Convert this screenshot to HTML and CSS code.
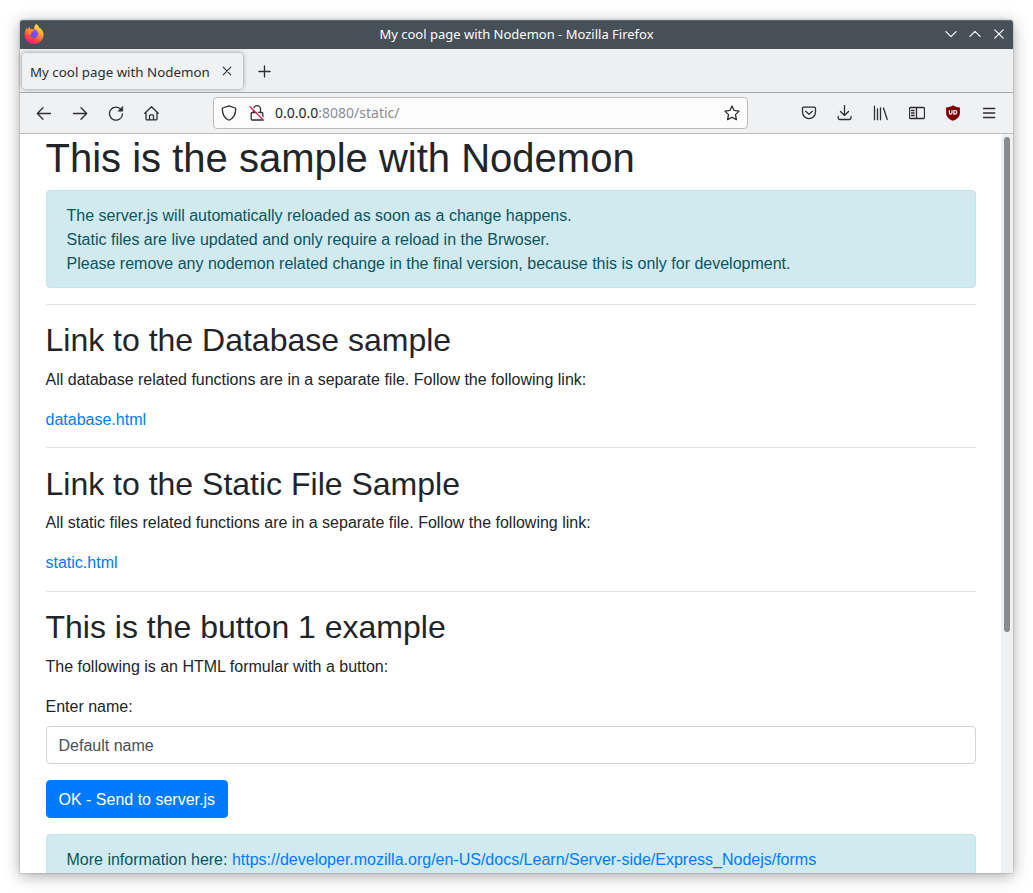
FILE: index.html
```html
<!DOCTYPE html>
<html lang="en">
<head>
<meta charset="utf-8">
<title>My cool page with Nodemon</title>
<link rel="stylesheet" href="styles.css">
</head>
<body>
<div class="window">
  <header class="titlebar">
    <svg class="firefox" viewBox="0 0 20 20">
      <defs>
        <linearGradient id="flame" x1=".8" y1="0" x2=".3" y2="1">
          <stop offset="0" stop-color="#fff44f"/><stop offset=".4" stop-color="#ffa22b"/><stop offset=".7" stop-color="#ff4b3c"/><stop offset="1" stop-color="#e9168a"/>
        </linearGradient>
        <linearGradient id="globe" x1=".7" y1="0" x2=".3" y2="1">
          <stop offset="0" stop-color="#a64cf0"/><stop offset="1" stop-color="#5b4be0"/>
        </linearGradient>
      </defs>
      <path fill="url(#flame)" d="M12.4 0c1.500 1.200 2.400 2.500 2.800 3.800 2.400 1.100 4.400 3.800 4.400 7a9.500 9.200 0 0 1-19 .2c0-3 .8-5.300 2-7.300.2.900.5 1.400.8 1.700C4 4.300 4.800 3.400 5.600 3c0 .9.400 1.500.9 2 1.300-.2 2.500.1 3.600.8C9.700 3.700 10.600 1.600 12.400 0z"/>
      <circle cx="10" cy="9.800" r="4.200" fill="url(#globe)"/>
      <path fill="#ff8a22" d="M3.500 5.500C5.500 4.600 8 5 10 6.600c0 1-2.300 1.100-2.700 2 .2.900-.8 1.600-1.100 2.600C4.500 10 3.300 8 3.500 5.500z"/>
    </svg>
    <span class="window-title">My cool page with Nodemon - Mozilla Firefox</span>
    <div class="window-buttons">
      <svg viewBox="0 0 12 12"><path d="M.9 3.600 6 8.700l5.100-5.100"/></svg>
      <svg viewBox="0 0 12 12"><path d="M.9 8.400 6 3.300l5.100 5.100"/></svg>
      <svg viewBox="0 0 12 12"><path d="m1.800 1.800 8.400 8.400m0-8.400-8.400 8.400"/></svg>
    </div>
  </header>
  <div class="tabs">
    <div class="tab">
      <span>My cool page with Nodemon</span>
      <svg class="tab-close" viewBox="0 0 10 10"><path d="m1.200 1.200 7.600 7.600m0-7.600-7.600 7.600"/></svg>
    </div>
    <svg class="new-tab" viewBox="0 0 13 13"><path d="M6.500.9v11.200M.9 6.500h11.200"/></svg>
  </div>
  <nav class="toolbar">
    <div class="nav-buttons">
      <svg viewBox="0 0 16 16"><path d="M14.500 8.500h-13M7 2.800 1.300 8.500 7 14.200"/></svg>
      <svg viewBox="0 0 16 16"><path d="M1.500 8.500h13M9 2.800l5.700 5.700L9 14.200"/></svg>
      <svg viewBox="0 0 16 16"><path d="M13 4.500A6.500 6.500 0 1 0 14.500 9"/><path class="solid" d="M14.800 1.500v4.700h-4.700z"/></svg>
      <svg viewBox="0 0 16 16"><path d="M.8 8.300 7.500 1.700l6.700 6.600M2 7.300v6.400c0 .8.400 1.200 1.200 1.200h8.600c.8 0 1.200-.4 1.200-1.200V7.300M5.500 14.700v-4c0-.6.300-.9.900-.9h2.200c.6 0 .9.300.9.900v4"/></svg>
    </div>
    <div class="urlbar">
      <svg viewBox="0 0 16 16"><path d="M8 .9 14.200 3c.4.200.5.400.5.800 0 4.800-1.700 9.200-6.200 11.200-.3.100-.7.100-1 0C3 13 1.300 8.600 1.300 3.800c0-.4.100-.6.500-.8z"/></svg>
      <svg class="lock" viewBox="0 0 16 16"><path d="M4.500 7.500V4.200a3.500 3.500 0 0 1 7 0v3.300M3.200 7.500h9.600c.7 0 1 .3 1 1V14c0 .7-.3 1-1 1H3.200c-.7 0-1-.3-1-1V8.500c0-.7.300-1 1-1z"/><path class="halo" d="m2 1 13.500 13.500"/><path class="slash" d="m1 1.800 13.500 13.400"/></svg>
      <span class="url">0.0.0.0<span class="path">:8080/static/</span></span>
      <svg class="star" viewBox="0 0 16 16"><path d="m8 .9 2.100 4.500 5 .7-3.600 3.500.9 5-4.400-2.400-4.400 2.400.9-5L.9 6.100l5-.7z"/></svg>
    </div>
    <div class="actions">
      <svg viewBox="0 0 16 16"><path d="M2.700 2.200h10.600c.8 0 1.200.4 1.200 1.200v3.700a6.500 6.500 0 0 1-13 0V3.400c0-.8.400-1.200 1.200-1.200zM4.700 6.200 8 9.400l3.300-3.200"/></svg>
      <svg viewBox="0 0 16 16"><path d="M7.500 0v10.500M3.500 6.500l4 4 4-4M1.200 11.500v1.600c0 .9.500 1.400 1.400 1.400h10c.9 0 1.400-.5 1.400-1.400v-1.600"/></svg>
      <svg viewBox="0 0 16 16"><path d="M1.500 1.200v13.500M4.500 4v10.700M7.500 3v11.700M10.500 3 14.200 14.500"/></svg>
      <svg viewBox="0 0 16 16"><path d="M1.800 2.500h12.400c.9 0 1.300.4 1.300 1.300v8.400c0 .9-.4 1.300-1.300 1.300H1.800c-.9 0-1.300-.4-1.300-1.300V3.800c0-.9.400-1.300 1.300-1.300zM7.500 2.500v11M2.500 5.500h2.700M2.500 8h2.700M2.500 10.500h2.700"/></svg>
      <svg viewBox="0 0 16 16"><path class="shield" d="M8 .2c2 1.400 4 2.100 6.900 2.300v5.200c0 4-2.700 6.300-6.900 8.100C3.800 14 1.100 11.700 1.100 7.700V2.500C4 2.300 6 1.600 8 .2z"/><path class="badge" d="M4.400 5.500v2.200c0 1 .5 1.500 1.300 1.500S7 8.700 7 7.700V5.500M8.900 5.500h1a1.800 1.800 0 0 1 0 3.700h-1z"/></svg>
      <svg viewBox="0 0 16 16"><path d="M2.500 3.500h11.200M2.500 8h11.200M2.500 12.500h11.200"/></svg>
    </div>
  </nav>
  <div class="viewport">
    <main class="page">
      <div class="container">
        <h1>This is the sample with Nodemon</h1>
        <div class="alert">The server.js will automatically reloaded as soon as a change happens.<br>Static files are live updated and only require a reload in the Brwoser.<br>Please remove any nodemon related change in the final version, because this is only for development.</div>
        <hr>
        <h2>Link to the Database sample</h2>
        <p>All database related functions are in a separate file. Follow the following link:</p>
        <p><a href="#">database.html</a></p>
        <hr>
        <h2>Link to the Static File Sample</h2>
        <p>All static files related functions are in a separate file. Follow the following link:</p>
        <p><a href="#">static.html</a></p>
        <hr>
        <h2>This is the button 1 example</h2>
        <p>The following is an HTML formular with a button:</p>
        <form>
          <label for="name">Enter name:</label>
          <input class="field" id="name" type="text" value="Default name">
          <button class="submit" type="button">OK - Send to server.js</button>
        </form>
        <div class="alert">More information here: <a href="#">https://developer.mozilla.org/en-US/docs/Learn/Server-side/Express_Nodejs/forms</a></div>
      </div>
    </main>
    <div class="scrollbar"><div class="thumb"></div></div>
  </div>
</div>
</body>
</html>
```
FILE: styles.css
```css
*, *::before, *::after { box-sizing: border-box; }
body {
  margin: 0;
  padding: 20px;
  height: 893px;
  overflow: hidden;
  background: #fff;
  font-family: "Noto Sans", sans-serif;
}
svg { display: block; flex: none; fill: none; stroke: #2c2e30; stroke-width: 1.3; stroke-linecap: round; stroke-linejoin: round; }
.window {
  display: flex;
  flex-direction: column;
  width: 993px;
  height: 853px;
  background: #fff;
  border-radius: 3px 3px 0 0;
  box-shadow: 0 0 2px rgba(0, 0, 0, .35), 0 3px 16px rgba(0, 0, 0, .34);
}
.titlebar {
  display: grid;
  grid-template-columns: 80px 1fr 80px;
  align-items: center;
  height: 29px;
  padding-bottom: 2px;
  background: #475057;
  border-top: 1px solid #5d6b73;
  border-radius: 3px 3px 0 0;
  color: #fcfcfc;
}
.firefox { width: 20px; height: 20px; margin-left: 4px; stroke: none; }
.window-title { text-align: center; font-size: 13px; line-height: 18px; }
.window-buttons { display: flex; justify-content: flex-end; gap: 12px; padding-right: 8px; }
.window-buttons svg { width: 12px; height: 12px; stroke: #fcfcfc; stroke-width: 1.2; }
.tabs {
  display: flex;
  align-items: center;
  height: 44px;
  padding-left: 2px;
  background: #eeeff1;
  border-bottom: 1px solid #a5a7a9;
}
.tab {
  display: flex;
  align-items: center;
  justify-content: space-between;
  width: 221px;
  height: 36px;
  padding: 2px 11px 0 8px;
  border-radius: 4px;
  background: #f0f1f3;
  box-shadow: 0 0 4px rgba(0, 0, 0, .42);
  color: #2b2d30;
  font-size: 13.33px;
  white-space: nowrap;
}
.tab-close { width: 10px; height: 10px; margin-top: -2px; stroke-width: 1.1; }
.new-tab { width: 13px; height: 13px; margin: 1px 0 0 15px; stroke-width: 1.3; }
.toolbar {
  display: flex;
  align-items: center;
  height: 41px;
  padding: 0 16px;
  background: #f0f1f3;
  border-bottom: 1px solid #b9bbbd;
}
.toolbar svg { width: 16px; height: 16px; }
.toolbar .solid { fill: #2c2e30; stroke-width: .5; }
.toolbar .shield { fill: #800000; stroke: none; }
.toolbar .badge { stroke: #fff; stroke-width: 1.2; }
.nav-buttons { display: flex; gap: 20px; width: 177px; }
.urlbar {
  display: flex;
  align-items: center;
  width: 535px;
  height: 32px;
  padding: 0 7px;
  border: 1px solid #b9bbbd;
  border-radius: 4px;
  background: #fcfcfc;
}
.urlbar .lock { margin-left: 12px; }
.lock .halo { stroke: #fcfcfc; stroke-width: 1.2; }
.lock .slash { stroke: #e22850; stroke-width: 1.3; }
.url { margin-left: 10px; color: #232629; font-size: 14px; line-height: 20px; }
.path { color: #8c8e90; }
.star { margin-left: auto; }
.actions { display: flex; gap: 20px; margin-left: auto; }
.viewport { display: flex; flex: 1; min-height: 0; overflow: hidden; }
.page {
  flex: 1;
  overflow: hidden;
  background: #fff;
  color: #212529;
  font: 16px/24px "Liberation Sans", Arial, sans-serif;
}
.container { width: 960px; margin: 0 auto; padding: 0 15px; }
h1, h2 { margin: 0 0 8px; font-weight: 400; line-height: 1.2; }
h1 { font-size: 40px; }
h2 { margin-bottom: 7.8px; padding-top: .2px; font-size: 32px; }
p { margin: 0 0 15.5px; padding-top: .5px; }
a { color: #007bff; text-decoration: none; }
hr { height: 1px; margin: 16px 0; border: 0; background: #e5e5e5; }
p + hr { margin-top: 15.5px; }
.alert {
  margin-bottom: 16px;
  padding: 12.5px 20px 11.5px;
  border: 1px solid #bee5eb;
  border-radius: 4px;
  background: #d0eaef;
  color: #0c5460;
}
label { display: block; margin-bottom: 7.5px; padding-top: .5px; }
.field {
  display: block;
  width: 100%;
  height: 38px;
  margin-bottom: 16px;
  padding: 7px 12px 5px;
  border: 1px solid #ced4da;
  border-radius: 4px;
  background: #fff;
  color: #495057;
  font: inherit;
}
.submit {
  display: block;
  height: 38px;
  margin-bottom: 16px;
  padding: 7px 12px 5px;
  border: 1px solid #007bff;
  border-radius: 4px;
  background: #007bff;
  color: #fff;
  font: inherit;
}
.scrollbar { width: 12px; padding: 3px 3px 0; background: #eff0f2; }
.thumb { height: 495px; border-radius: 3px; background: #898b8d; }
```
